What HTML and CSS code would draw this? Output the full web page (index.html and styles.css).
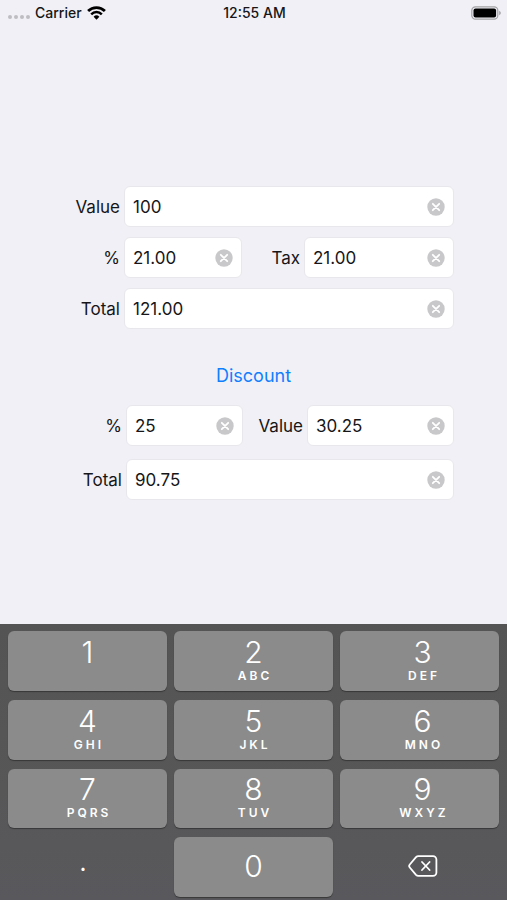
FILE: index.html
```html
<!DOCTYPE html>
<html lang="en">
<head>
  <meta charset="utf-8">
  <meta name="viewport" content="width=device-width, initial-scale=1">
  <title>Tax and Discount</title>
  <link rel="stylesheet" href="styles.css">
</head>
<body>
  <svg class="symbols" aria-hidden="true">
    <symbol id="clear" viewBox="0 0 18 18">
      <circle cx="9" cy="9" r="8.7" fill="#c8c8ca"/>
      <path d="M5.8 5.8l6.4 6.4M12.2 5.8l-6.4 6.4" stroke="#fff" stroke-width="1.8" stroke-linecap="round"/>
    </symbol>
  </svg>

  <header class="status">
    <div class="carrier">
      <span class="dots"><i></i><i></i><i></i><i></i></span>
      <span>Carrier</span>
      <svg class="wifi" viewBox="0 0 19 14" aria-hidden="true">
        <path d="M1.1 5.1a11.900 11.900 0 0 1 16.800 0" fill="none" stroke="#000" stroke-width="2.8"/>
        <path d="M4.200 8.300a7.500 7.500 0 0 1 10.600 0" fill="none" stroke="#000" stroke-width="2.500"/>
        <path d="M9.5 13.8L6.6 10.8a4.1 4.1 0 0 1 5.8 0z"/>
      </svg>
    </div>
    <time>12:55 AM</time>
    <svg class="battery" viewBox="0 0 30 14" aria-hidden="true">
      <rect x=".8" y=".8" width="26" height="12.4" rx="3.6" fill="none" stroke="#a2a2a5" stroke-width="1.2"/>
      <rect x="2.5" y="2.5" width="22.6" height="9" rx="2"/>
      <path d="M28.2 4.8q1.6.7 1.6 2.2t-1.6 2.2z" fill="#a2a2a5"/>
    </svg>
  </header>

  <main>
    <form class="group tax">
      <label for="value">Value</label>
      <div class="field wide"><input id="value" type="text" inputmode="decimal" value="100"><button type="button" aria-label="Clear value"><svg><use href="#clear"/></svg></button></div>
      <label for="rate">%</label>
      <div class="field"><input id="rate" type="text" inputmode="decimal" value="21.00"><button type="button" aria-label="Clear rate"><svg><use href="#clear"/></svg></button></div>
      <label for="tax">Tax</label>
      <div class="field"><input id="tax" type="text" inputmode="decimal" value="21.00"><button type="button" aria-label="Clear tax"><svg><use href="#clear"/></svg></button></div>
      <label for="total">Total</label>
      <div class="field wide"><input id="total" type="text" inputmode="decimal" value="121.00"><button type="button" aria-label="Clear total"><svg><use href="#clear"/></svg></button></div>
    </form>

    <button class="discount-toggle" type="button">Discount</button>

    <form class="group discount">
      <label for="d-rate">%</label>
      <div class="field"><input id="d-rate" type="text" inputmode="decimal" value="25"><button type="button" aria-label="Clear discount rate"><svg><use href="#clear"/></svg></button></div>
      <label for="d-value">Value</label>
      <div class="field"><input id="d-value" type="text" inputmode="decimal" value="30.25"><button type="button" aria-label="Clear discount value"><svg><use href="#clear"/></svg></button></div>
      <label for="d-total">Total</label>
      <div class="field wide"><input id="d-total" type="text" inputmode="decimal" value="90.75"><button type="button" aria-label="Clear discounted total"><svg><use href="#clear"/></svg></button></div>
    </form>
  </main>

  <section class="keypad" aria-label="Keypad">
    <button type="button" class="key">1<small></small></button>
    <button type="button" class="key">2<small>ABC</small></button>
    <button type="button" class="key">3<small>DEF</small></button>
    <button type="button" class="key">4<small>GHI</small></button>
    <button type="button" class="key">5<small>JKL</small></button>
    <button type="button" class="key">6<small>MNO</small></button>
    <button type="button" class="key">7<small>PQRS</small></button>
    <button type="button" class="key">8<small>TUV</small></button>
    <button type="button" class="key">9<small>WXYZ</small></button>
    <button type="button" class="key plain point">.</button>
    <button type="button" class="key">0</button>
    <button type="button" class="key plain" aria-label="Delete">
      <svg class="delete" viewBox="0 0 30 22" aria-hidden="true">
        <path d="M10.4 1.2H25a3.4 3.4 0 0 1 3.4 3.4v12.8a3.4 3.4 0 0 1-3.4 3.4H10.4q-1.4 0-2.4-1L1.8 12.500q-1.300-1.500 0-3L8 2.200q1-1 2.400-1z"/>
        <path d="M14 7l7.600 8M21.600 7l-7.600 8"/>
      </svg>
    </button>
  </section>
</body>
</html>
```

FILE: styles.css
```css
* {
  box-sizing: border-box;
}

body {
  display: flex;
  flex-direction: column;
  min-height: 100vh;
  margin: 0;
  background: #f1f0f6;
  color: #161618;
  font-family: Inter, "Liberation Sans", sans-serif;
  font-size: 17px;
}

button,
input {
  padding: 0;
  border: 0;
  background: none;
  color: inherit;
  font: inherit;
}

.symbols {
  position: absolute;
  width: 0;
  height: 0;
}

.status {
  display: grid;
  grid-template-columns: 1fr auto 1fr;
  align-items: center;
  height: 25px;
  padding: 0 6px 0 8px;
  font-size: 14px;
  font-weight: 500;
}

.carrier {
  display: flex;
  align-items: center;
  gap: 5px;
}

.dots {
  display: flex;
  gap: 2px;
  padding-top: 9px;
}

.dots i {
  width: 4px;
  height: 4px;
  border-radius: 50%;
  background: #bdbdc2;
}

.wifi {
  width: 19px;
  height: 14px;
}

.battery {
  justify-self: end;
  width: 30px;
  height: 14px;
}

main {
  display: flex;
  flex: 1;
  flex-direction: column;
  padding: 161px 53px 40px 60px;
}

.group {
  display: grid;
  align-items: center;
  column-gap: 4px;
}

.tax {
  grid-template-columns: 60px 118fr 54px 150fr;
  row-gap: 10px;
}

.discount {
  grid-template-columns: 62px 117fr 56px 147fr;
  row-gap: 13px;
}

label {
  text-align: right;
}

.field {
  display: flex;
  align-items: center;
  min-width: 0;
  height: 41px;
  padding: 0 8px;
  border: 1px solid #e8e8ec;
  border-radius: 6px;
  background: #fff;
}

.wide {
  grid-column: span 3;
}

.field input {
  flex: 1;
  width: 0;
  outline: 0;
}

.field button,
.field svg {
  display: block;
  width: 18px;
  height: 18px;
}

.discount-toggle {
  align-self: center;
  margin: 36px 7px 18px 0;
  color: #0f7fff;
  font-size: 18px;
  line-height: 22px;
}

.keypad {
  display: grid;
  grid-template-columns: repeat(3, 1fr);
  grid-template-rows: repeat(4, 1fr);
  gap: 9px 7px;
  min-height: 276px;
  padding: 7px 8px 3px;
  background: linear-gradient(#545455, #575758 60%, #59595d);
}

.key {
  display: flex;
  flex-direction: column;
  align-items: center;
  justify-content: center;
  padding-bottom: 2px;
  border-radius: 6px;
  background: #8b8b8c;
  box-shadow: 0 1px 1px #383839;
  color: #fff;
  font-size: 30px;
  font-weight: 300;
  line-height: 32px;
}

.key:nth-child(3n) {
  padding-left: 6px;
}

.key small {
  height: 16px;
  padding-left: 3px;
  font-size: 12px;
  font-weight: 600;
  letter-spacing: 3px;
  line-height: 16px;
}

.key.plain {
  background: none;
  box-shadow: none;
}

.key.point {
  padding: 0 9px 14px 0;
}

.delete {
  width: 30px;
  height: 22px;
  fill: none;
  stroke: #fff;
  stroke-width: 1.8;
  stroke-linecap: round;
  stroke-linejoin: round;
}
```
